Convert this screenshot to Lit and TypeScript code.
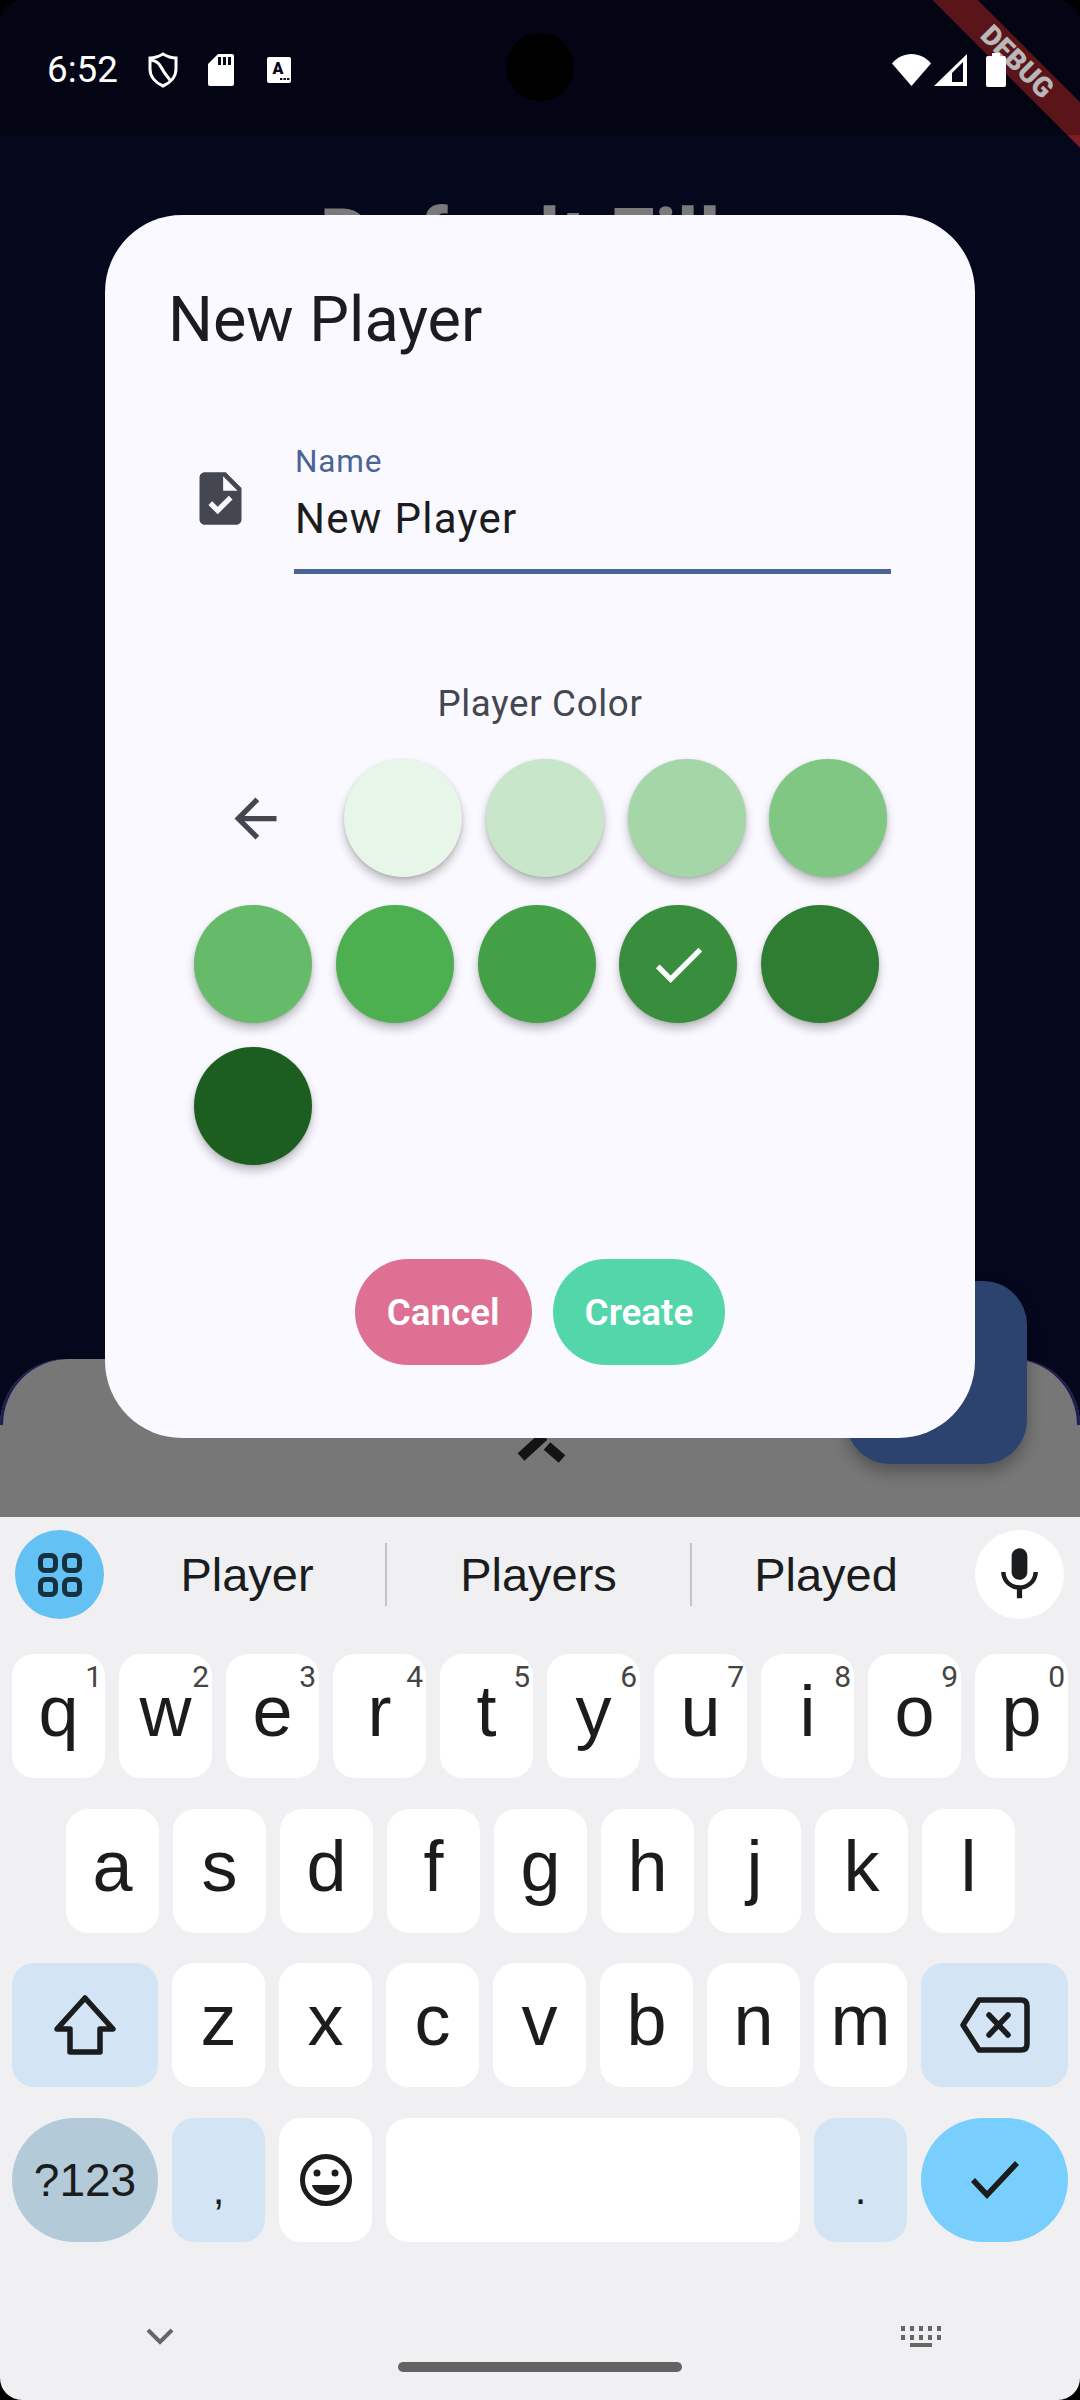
import { LitElement, html, css, svg } from 'lit';
import { customElement } from 'lit/decorators.js';

const GREENS_TOP = ['#e8f5e9', '#c8e6c9', '#a5d6a7', '#81c784'];
const GREENS_MID = ['#66bb6a', '#4caf50', '#43a047', '#388e3c', '#2e7d32'];

const ROW_ONE = [
  ['q', '1'], ['w', '2'], ['e', '3'], ['r', '4'], ['t', '5'],
  ['y', '6'], ['u', '7'], ['i', '8'], ['o', '9'], ['p', '0'],
];
const ROW_TWO = ['a', 's', 'd', 'f', 'g', 'h', 'j', 'k', 'l'];
const ROW_THREE = ['z', 'x', 'c', 'v', 'b', 'n', 'm'];

const shieldIcon = svg`<svg width="30" height="36" viewBox="0 0 30 36" fill="none" stroke="#fff" stroke-width="3">
  <path d="M15 2C20 5 24 6 28 6V17C28 25 22 31 15 34C8 31 2 25 2 17V6C6 6 10 5 15 2Z"/>
  <path d="M3 8Q10 9 13 15Q16 21 22 28"/>
</svg>`;

const sdIcon = svg`<svg width="26" height="32" viewBox="0 0 26 32">
  <path fill="#fff" d="M10 0H24a2 2 0 0 1 2 2V30a2 2 0 0 1-2 2H2a2 2 0 0 1-2-2V10Z"/>
  <path fill="#04061a" d="M10 3h3v8h-3zM15 3h3v8h-3zM20 3h3v8h-3z"/>
</svg>`;

const autoIcon = svg`<svg width="24" height="26" viewBox="0 0 24 26">
  <rect width="24" height="26" rx="2" fill="#fff"/>
  <text x="11" y="17" font-family="Roboto, sans-serif" font-weight="900" font-size="16" text-anchor="middle" fill="#04061a">A</text>
  <path fill="#04061a" d="M13 21h2.4v2H13zM16.5 21h2.4v2h-2.4zM20 21h2.4v2H20z"/>
</svg>`;

const wifiIcon = svg`<svg width="39" height="32" viewBox="0 0 39 32">
  <path fill="#fff" d="M0 9.5C5 3.5 12 0 19.5 0S34 3.500 39 9.500L19.500 32Z"/>
</svg>`;

const signalIcon = svg`<svg width="33" height="32" viewBox="0 0 33 32">
  <path fill="#fff" d="M33 0V32H0Z"/>
  <path fill="#04061a" d="M18 19L29 8V28H18Z"/>
</svg>`;

const batteryIcon = svg`<svg width="20" height="34" viewBox="0 0 20 34">
  <path fill="#fff" d="M6 0H14V3H18a2 2 0 0 1 2 2V32a2 2 0 0 1-2 2H2a2 2 0 0 1-2-2V5a2 2 0 0 1 2-2H6Z"/>
</svg>`;

const taskIcon = svg`<svg width="63" height="63" viewBox="0 0 24 24" fill="#44474f">
  <path d="M14 2H6c-1.100 0-1.990.9-1.990 2L4 20c0 1.100.89 2 1.990 2H18c1.100 0 2-.9 2-2V8l-6-6zm-3.060 16L7.400 14.460l1.410-1.410 2.120 2.120 4.240-4.240 1.410 1.410L10.940 18zM13 9V3.500L18.500 9H13z"/>
</svg>`;

const backIcon = svg`<svg width="63" height="63" viewBox="0 0 24 24" fill="#44474f">
  <path d="M20 11H7.830l5.590-5.590L12 4l-8 8 8 8 1.410-1.410L7.830 13H20v-2z"/>
</svg>`;

const checkIcon = svg`<svg width="63" height="63" viewBox="0 0 24 24" fill="#fff">
  <path d="M9 16.170L4.830 12l-1.420 1.410L9 19 21 7l-1.410-1.410z"/>
</svg>`;

const chevronIcon = svg`<svg width="60" height="30" viewBox="0 0 60 30" fill="none" stroke="#141414" stroke-width="10">
  <path d="M11 24L34 3"/>
  <path d="M37 13L52 26"/>
</svg>`;

const gridIcon = svg`<svg width="44" height="44" viewBox="0 0 44 44" fill="none" stroke="#15303f" stroke-width="5">
  <rect x="2.500" y="2.500" width="15" height="15" rx="4.500"/>
  <rect x="26.500" y="2.500" width="15" height="15" rx="4.500"/>
  <rect x="2.500" y="26.500" width="15" height="15" rx="4.500"/>
  <rect x="26.500" y="26.500" width="15" height="15" rx="4.500"/>
</svg>`;

const micIcon = svg`<svg width="63" height="63" viewBox="0 0 24 24" fill="#1a1c1e">
  <path d="M12 14c1.660 0 2.990-1.340 2.990-3L15 5c0-1.660-1.340-3-3-3S9 3.340 9 5v6c0 1.660 1.340 3 3 3zm5.300-3c0 3-2.540 5.100-5.300 5.100S6.700 14 6.700 11H5c0 3.410 2.720 6.230 6 6.720V21h2v-3.280c3.280-.48 6-3.300 6-6.720h-1.700z"/>
</svg>`;

const shiftIcon = svg`<svg width="66" height="62" viewBox="0 0 66 62" fill="none" stroke="#1a1c1e" stroke-width="5.500" stroke-linejoin="round">
  <path d="M33 4L61 35H48V58H18V35H5Z"/>
</svg>`;

const backspaceIcon = svg`<svg width="70" height="56" viewBox="0 0 70 56" fill="none" stroke="#1a1c1e" stroke-width="5.500" stroke-linecap="round" stroke-linejoin="round">
  <path d="M19 3H61Q67 3 67 9V47Q67 53 61 53H19L3 28Z"/>
  <path d="M29 18L48 38M48 18L29 38"/>
</svg>`;

const emojiIcon = svg`<svg width="54" height="54" viewBox="0 0 54 54">
  <circle cx="27" cy="27" r="23.500" fill="none" stroke="#1a1c1e" stroke-width="5"/>
  <circle cx="18" cy="20" r="3.500" fill="#1a1c1e"/>
  <circle cx="36" cy="20" r="3.500" fill="#1a1c1e"/>
  <path d="M13 32H41C40 38 34 42 27 42S14 38 13 32Z" fill="#1a1c1e"/>
</svg>`;

const enterIcon = svg`<svg width="50" height="38" viewBox="0 0 50 38" fill="none" stroke="#1a1c1e" stroke-width="5.500">
  <path d="M3 19L17 34L47 2"/>
</svg>`;

const collapseIcon = svg`<svg width="28" height="17" viewBox="0 0 28 17" fill="none" stroke="#666" stroke-width="4">
  <path d="M2 2L14 14L26 2"/>
</svg>`;

const keyboardIcon = svg`<svg width="40" height="21" viewBox="0 0 40 21" fill="#666">
  <path d="M0 0h4v5H0zM9 0h4v5H9zM18 0h4v5h-4zM27 0h4v5h-4zM36 0h4v5h-4z"/>
  <path d="M0 9h4v5H0zM9 9h4v5H9zM18 9h4v5h-4zM27 9h4v5h-4zM36 9h4v5h-4z"/>
  <path d="M9 17h22v4H9z"/>
</svg>`;

@customElement('app-root')
export class AppRoot extends LitElement {
  static styles = css`
    :host {
      display: block;
      width: 1080px;
      height: 2400px;
      background: #000;
      font-family: Roboto, sans-serif;
    }

    .screen {
      width: 1080px;
      height: 2400px;
      border-radius: 22px;
      overflow: hidden;
      display: flex;
      flex-direction: column;
    }

    /* app behind the dialog */
    .app {
      position: relative;
      height: 1517px;
      display: flex;
      flex-direction: column;
      background: #05071c;
      overflow: hidden;
    }

    .statusbar {
      position: relative;
      z-index: 2;
      box-sizing: border-box;
      height: 135px;
      padding: 48px 74px 0 47px;
      background: rgba(0, 0, 0, 0.28);
    }

    .status-row {
      display: flex;
      align-items: center;
      height: 44px;
      color: #fff;
    }

    .time {
      width: 71px;
      font-size: 36.75px;
      line-height: 44px;
    }

    .shield { margin-left: 30px; display: flex; }
    .sd { margin-left: 30px; display: flex; }
    .auto { margin-left: 33px; display: flex; }
    .wifi { margin-left: auto; display: flex; }
    .signal { margin-left: 3px; display: flex; }
    .battery { margin-left: 19px; display: flex; }

    .camera {
      position: absolute;
      left: 506px;
      top: 33px;
      width: 68px;
      height: 68px;
      border-radius: 50%;
      background: #000;
    }

    .banner {
      position: absolute;
      z-index: 1;
      left: 867px;
      top: 46px;
      width: 300px;
      height: 32px;
      transform: rotate(45deg);
      background: #7e1c24;
      color: #fff;
      font-size: 28px;
      font-weight: 900;
      line-height: 32px;
      text-align: center;
    }

    .page-title {
      margin-top: 55px;
      padding-right: 40px;
      text-align: center;
      color: #7a7a7a;
      font-size: 83px;
      font-weight: 700;
      line-height: 100px;
    }

    .sheet {
      position: relative;
      margin-top: auto;
      height: 158px;
      border-radius: 66px 66px 0 0;
      background: #777;
      display: flex;
      justify-content: center;
    }

    /* thin dark edge that only shows on the rounded corners */
    .sheet::before {
      content: '';
      position: absolute;
      left: 0;
      right: 0;
      top: 0;
      height: 66px;
      border-radius: 66px 66px 0 0;
      box-shadow: inset 3px 0 0 #1c1c50, inset -3px 0 0 #1c1c50;
    }

    .sheet-handle {
      display: flex;
      margin-top: 74px;
      height: 30px;
    }

    .fab {
      position: absolute;
      left: 846px;
      top: 1281px;
      width: 181px;
      height: 183px;
      border-radius: 44px;
      background: #2c4370;
      box-shadow: 0 8px 16px rgba(0, 0, 0, 0.3);
    }

    /* dialog */
    .dialog {
      position: absolute;
      left: 105px;
      top: 215px;
      box-sizing: border-box;
      width: 870px;
      height: 1223px;
      padding-top: 62.500px;
      border-radius: 77px;
      background: #faf9ff;
    }

    .dialog-title {
      padding-left: 63px;
      color: #1a1c20;
      font-size: 63px;
      line-height: 84px;
    }

    .field-row {
      display: flex;
      margin: 80.500px 0 0 84px;
    }

    .field-icon {
      display: flex;
      margin-top: 25px;
      margin-right: 42px;
      height: 63px;
    }

    .field {
      box-sizing: border-box;
      width: 597px;
      height: 132px;
      border-bottom: 5.250px solid #4a6595;
      padding-left: 1px;
    }

    .field-label {
      margin-top: 1px;
      color: #4a6595;
      font-size: 31.500px;
      letter-spacing: 0.8px;
      line-height: 38px;
    }

    .field-value {
      margin-top: 12.700px;
      color: #1a1c20;
      font-size: 42px;
      letter-spacing: 1.300px;
      line-height: 50px;
    }

    .color-label {
      margin-top: 108px;
      text-align: center;
      color: #44474f;
      font-size: 36.750px;
      letter-spacing: 0.660px;
      line-height: 44px;
    }

    .swatches {
      display: flex;
      flex-direction: column;
      margin-top: 33px;
      padding-left: 89px;
    }

    .swatch-row {
      display: flex;
      gap: 23.750px;
    }

    .swatch-row.second { margin-top: 28px; }
    .swatch-row.third { margin-top: 24px; }

    .back {
      display: flex;
      align-items: center;
      box-sizing: border-box;
      width: 126.250px;
      padding-left: 29.500px;
    }

    .swatch {
      display: flex;
      align-items: center;
      justify-content: center;
      width: 118px;
      height: 118px;
      border-radius: 50%;
      box-shadow: 0 6px 10px rgba(0, 0, 0, 0.24), 0 1px 3px rgba(0, 0, 0, 0.12);
    }

    .actions {
      display: flex;
      justify-content: center;
      gap: 21px;
      margin-top: 94px;
    }

    .btn {
      display: flex;
      align-items: center;
      height: 106px;
      padding: 0 32px;
      border-radius: 53px;
      color: #fff;
      font-size: 36.750px;
      font-weight: 600;
    }

    .btn.cancel { background: #de7094; }
    .btn.create { background: #53d6aa; }

    /* keyboard */
    .keyboard {
      flex: 1;
      background: #f0f0f2;
      color: #1a1c1e;
      font-family: 'Liberation Sans', Roboto, sans-serif;
    }

    .strip {
      display: flex;
      align-items: flex-start;
      box-sizing: border-box;
      height: 137px;
      padding: 13px 0 0 15px;
    }

    .round {
      flex: none;
      display: flex;
      align-items: center;
      justify-content: center;
      width: 89px;
      height: 89px;
      border-radius: 50%;
    }

    .round.tools { background: #64c1f3; }
    .round.mic { background: #fff; margin-left: 14px; }

    .word {
      flex: none;
      height: 89px;
      line-height: 89px;
      text-align: center;
      font-size: 47px;
    }

    .word.a { width: 282px; padding-left: 4px; box-sizing: border-box; }
    .word.b { width: 305px; }
    .word.c { width: 270px; }

    .word + .word {
      position: relative;
    }

    .word + .word::before {
      content: '';
      position: absolute;
      left: -1px;
      top: 13px;
      width: 2px;
      height: 63px;
      background: #c5c5c7;
    }

    .rows {
      display: flex;
      flex-direction: column;
      gap: 30.670px;
      padding: 0 12px;
    }

    .row {
      display: flex;
      gap: 14px;
      height: 124px;
    }

    .row.home { padding-left: 54px; }

    .key {
      position: relative;
      flex: none;
      display: flex;
      justify-content: center;
      box-sizing: border-box;
      width: 93px;
      height: 124px;
      padding-top: 14px;
      border-radius: 22px;
      background: #fff;
      font-size: 72px;
      line-height: 86px;
    }

    .key sup {
      position: absolute;
      top: 5px;
      right: 3px;
      color: #444;
      font-family: Roboto, sans-serif;
      font-size: 30px;
      line-height: 36px;
      vertical-align: baseline;
    }

    .key.icon {
      align-items: center;
      padding-top: 0;
    }

    .key.wide { width: 146px; }
    .key.wider { width: 147px; }
    .key.space { width: 414px; }
    .key.tint { background: #d3e5f5; }
    .key.pill { border-radius: 62px; }
    .key.symbols { background: #b3cbd8; font-size: 46px; }
    .key.enter { background: #78cffe; }
    .key.punct { padding-top: 29px; font-size: 42px; }

    .nav {
      display: flex;
      flex-direction: column;
      padding-top: 84px;
    }

    .nav-row {
      display: flex;
      justify-content: space-between;
      align-items: center;
      height: 21px;
      padding: 0 139px 0 146px;
    }

    .nav-row svg { display: block; }

    .home-pill {
      align-self: center;
      width: 284px;
      height: 10px;
      margin-top: 15px;
      border-radius: 5px;
      background: #636363;
    }
  `;

  render() {
    return html`
      <div class="screen">
        <div class="app">
          <div class="banner">DEBUG</div>
          <div class="statusbar">
            <div class="status-row">
              <span class="time">6:52</span>
              <span class="shield">${shieldIcon}</span>
              <span class="sd">${sdIcon}</span>
              <span class="auto">${autoIcon}</span>
              <span class="wifi">${wifiIcon}</span>
              <span class="signal">${signalIcon}</span>
              <span class="battery">${batteryIcon}</span>
            </div>
            <div class="camera"></div>
          </div>
          <div class="page-title">Default Fill</div>
          <div class="sheet"><span class="sheet-handle">${chevronIcon}</span></div>
          <div class="fab"></div>
          ${this.renderDialog()}
        </div>
        ${this.renderKeyboard()}
      </div>
    `;
  }

  renderDialog() {
    return html`
      <div class="dialog">
        <div class="dialog-title">New Player</div>
        <div class="field-row">
          <span class="field-icon">${taskIcon}</span>
          <div class="field">
            <div class="field-label">Name</div>
            <div class="field-value">New Player</div>
          </div>
        </div>
        <div class="color-label">Player Color</div>
        <div class="swatches">
          <div class="swatch-row">
            <span class="back">${backIcon}</span>
            ${GREENS_TOP.map((c) => html`<span class="swatch" style="background:${c}"></span>`)}
          </div>
          <div class="swatch-row second">
            ${GREENS_MID.map(
              (c) => html`<span class="swatch" style="background:${c}">${c === '#388e3c' ? checkIcon : ''}</span>`
            )}
          </div>
          <div class="swatch-row third">
            <span class="swatch" style="background:#1b5e20"></span>
          </div>
        </div>
        <div class="actions">
          <div class="btn cancel">Cancel</div>
          <div class="btn create">Create</div>
        </div>
      </div>
    `;
  }

  renderKeyboard() {
    return html`
      <div class="keyboard">
        <div class="strip">
          <span class="round tools">${gridIcon}</span>
          <span class="word a">Player</span>
          <span class="word b">Players</span>
          <span class="word c">Played</span>
          <span class="round mic">${micIcon}</span>
        </div>
        <div class="rows">
          <div class="row">
            ${ROW_ONE.map(([k, n]) => html`<div class="key">${k}<sup>${n}</sup></div>`)}
          </div>
          <div class="row home">
            ${ROW_TWO.map((k) => html`<div class="key">${k}</div>`)}
          </div>
          <div class="row">
            <div class="key icon wide tint">${shiftIcon}</div>
            ${ROW_THREE.map((k) => html`<div class="key">${k}</div>`)}
            <div class="key icon wider tint">${backspaceIcon}</div>
          </div>
          <div class="row">
            <div class="key icon wide pill symbols">?123</div>
            <div class="key punct tint">,</div>
            <div class="key icon">${emojiIcon}</div>
            <div class="key space"></div>
            <div class="key punct tint">.</div>
            <div class="key icon wider pill enter">${enterIcon}</div>
          </div>
        </div>
        <div class="nav">
          <div class="nav-row">${collapseIcon}${keyboardIcon}</div>
          <div class="home-pill"></div>
        </div>
      </div>
    `;
  }
}
